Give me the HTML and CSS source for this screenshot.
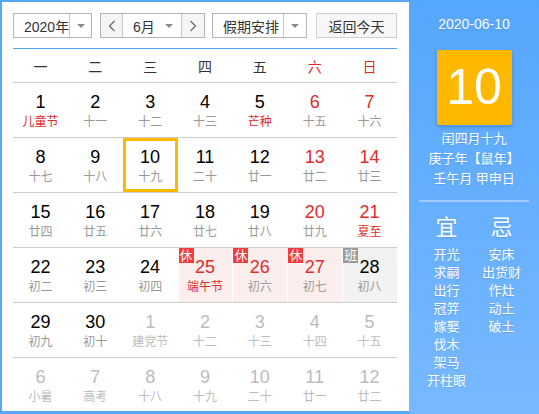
FILE: index.html
```html
<!DOCTYPE html>
<html lang="zh">
<head>
<meta charset="utf-8">
<link rel="stylesheet" href="styles.css">
</head>
<body>
<div class="wrap">
  <div class="main">
    <div class="toolbar">
      <div class="sel sel-year">
        <span class="sel-text">2020年</span>
        <span class="sel-arrow"><i class="tri"></i></span>
      </div>
      <div class="sel sel-month">
        <span class="nav"><svg width="8" height="12" viewBox="0 0 8 12"><polyline points="6.5,1 1.5,6 6.5,11" fill="none" stroke="#666" stroke-width="1.2"/></svg></span>
        <span class="sel-text month-text">6月</span>
        <span class="month-arrow"><i class="tri"></i></span>
        <span class="nav nav-r"><svg width="8" height="12" viewBox="0 0 8 12"><polyline points="1.5,1 6.5,6 1.5,11" fill="none" stroke="#666" stroke-width="1.2"/></svg></span>
      </div>
      <div class="sel sel-hol">
        <span class="sel-text">假期安排</span>
        <span class="sel-arrow"><i class="tri"></i></span>
      </div>
      <div class="btn-today">返回今天</div>
    </div>
    <div class="week">
      <span>一</span><span>二</span><span>三</span><span>四</span><span>五</span><span class="red">六</span><span class="red">日</span>
    </div>
    <div class="days">
      <div class="d"><b>1</b><em class="fest">儿童节</em></div>
      <div class="d"><b>2</b><em>十一</em></div>
      <div class="d"><b>3</b><em>十二</em></div>
      <div class="d"><b>4</b><em>十三</em></div>
      <div class="d"><b>5</b><em class="fest">芒种</em></div>
      <div class="d we"><b>6</b><em>十五</em></div>
      <div class="d we"><b>7</b><em>十六</em></div>

      <div class="d"><b>8</b><em>十七</em></div>
      <div class="d"><b>9</b><em>十八</em></div>
      <div class="d today"><b>10</b><em>十九</em></div>
      <div class="d"><b>11</b><em>二十</em></div>
      <div class="d"><b>12</b><em>廿一</em></div>
      <div class="d we"><b>13</b><em>廿二</em></div>
      <div class="d we"><b>14</b><em>廿三</em></div>

      <div class="d"><b>15</b><em>廿四</em></div>
      <div class="d"><b>16</b><em>廿五</em></div>
      <div class="d"><b>17</b><em>廿六</em></div>
      <div class="d"><b>18</b><em>廿七</em></div>
      <div class="d"><b>19</b><em>廿八</em></div>
      <div class="d we"><b>20</b><em>廿九</em></div>
      <div class="d we"><b>21</b><em class="fest">夏至</em></div>

      <div class="d"><b>22</b><em>初二</em></div>
      <div class="d"><b>23</b><em>初三</em></div>
      <div class="d"><b>24</b><em>初四</em></div>
      <div class="d hol we"><span class="tag">休</span><b>25</b><em class="fest">端午节</em></div>
      <div class="d hol we"><span class="tag">休</span><b>26</b><em>初六</em></div>
      <div class="d hol we"><span class="tag">休</span><b>27</b><em>初七</em></div>
      <div class="d work"><span class="tag tag-work">班</span><b>28</b><em>初八</em></div>

      <div class="d"><b>29</b><em>初九</em></div>
      <div class="d"><b>30</b><em>初十</em></div>
      <div class="d other"><b>1</b><em>建党节</em></div>
      <div class="d other"><b>2</b><em>十二</em></div>
      <div class="d other"><b>3</b><em>十三</em></div>
      <div class="d other"><b>4</b><em>十四</em></div>
      <div class="d other"><b>5</b><em>十五</em></div>

      <div class="d other last"><b>6</b><em>小暑</em></div>
      <div class="d other last"><b>7</b><em>高考</em></div>
      <div class="d other last"><b>8</b><em>十八</em></div>
      <div class="d other last"><b>9</b><em>十九</em></div>
      <div class="d other last"><b>10</b><em>二十</em></div>
      <div class="d other last"><b>11</b><em>廿一</em></div>
      <div class="d other last"><b>12</b><em>廿二</em></div>
    </div>
  </div>
  <div class="panel">
    <div class="p-date">2020-06-10</div>
    <div class="p-day">10</div>
    <div class="p-lunar">
      <div>闰四月十九</div>
      <div>庚子年【鼠年】</div>
      <div>壬午月 甲申日</div>
    </div>
    <div class="p-sep"></div>
    <div class="p-yiji">
      <div class="p-col">
        <div class="p-head">宜</div>
        <div>开光</div><div>求嗣</div><div>出行</div><div>冠笄</div><div>嫁娶</div><div>伐木</div><div>架马</div><div>开柱眼</div>
      </div>
      <div class="p-col">
        <div class="p-head">忌</div>
        <div>安床</div><div>出货财</div><div>作灶</div><div>动土</div><div>破土</div>
      </div>
    </div>
  </div>
</div>
</body>
</html>
```

FILE: styles.css
```css
* { box-sizing: border-box; }
html, body { margin: 0; padding: 0; }
body {
  font-family: "Liberation Sans", "Noto Sans CJK SC", sans-serif;
  background: #fff;
}
.wrap {
  width: 539px;
  height: 414px;
  display: flex;
  background: #57a7fb;
  overflow: hidden;
}
.main {
  width: 407px;
  margin: 2px 0 3px 2px;
  background: #fff;
  padding: 11px 12px 0 11px;
}
.toolbar {
  display: flex;
  height: 25px;
}
.sel {
  display: flex;
  height: 25px;
  border: 1px solid #b4b4b4;
  background: #fff;
  font-size: 14px;
  color: #333;
}
.sel-text {
  display: flex;
  align-items: center;
  white-space: nowrap;
  flex: 1;
}
.sel-arrow {
  display: flex;
  align-items: center;
  justify-content: center;
  width: 23px;
  flex: none;
  border-left: 1px solid #c8c8c8;
}
.tri {
  display: block;
  width: 0;
  height: 0;
  border-left: 4px solid transparent;
  border-right: 4px solid transparent;
  border-top: 4px solid #8a8a8a;
}
.sel-year { width: 79px; }
.sel-year .sel-text { padding-left: 10px; }
.sel-month { width: 105px; margin-left: 8px; }
.nav {
  width: 22px;
  flex: none;
  display: flex;
  align-items: center;
  justify-content: center;
  background: #f5f5f5;
  border-right: 1px solid #c8c8c8;
}
.nav-r { border-right: none; border-left: 1px solid #c8c8c8; width: 23px; }
.month-text { padding-left: 10px; }
.month-arrow {
  width: 24px;
  flex: none;
  display: flex;
  align-items: center;
  justify-content: center;
}
.sel-hol { width: 95px; margin-left: 7px; }
.sel-hol .sel-text { padding-left: 10px; }
.btn-today {
  width: 81px;
  height: 25px;
  margin-left: 9px;
  border: 1px solid #cfcfcf;
  background: #f7f7f7;
  font-size: 14px;
  color: #333;
  display: flex;
  align-items: center;
  justify-content: center;
}
.week {
  margin-top: 10px;
  border-top: 1px solid #4da3fb;
  border-bottom: 1px solid #cdcdcd;
  height: 35px;
  display: grid;
  grid-template-columns: repeat(7, 1fr);
  align-items: center;
  text-align: center;
  font-size: 14px;
  color: #333;
}
.week .red { color: #e02b2b; }
.days {
  display: grid;
  grid-template-columns: repeat(7, 1fr);
  grid-auto-rows: 55px;
}
.d {
  position: relative;
  border-bottom: 1px solid #cdcdcd;
  text-align: center;
  padding-top: 9px;
}
.d.last { border-bottom: none; }
.d b {
  display: block;
  font-weight: normal;
  font-size: 18px;
  line-height: 20px;
  color: #000;
}
.d em {
  display: block;
  font-style: normal;
  font-size: 12px;
  line-height: 20px;
  color: #999;
}
.d.we b { color: #e02b2b; }
.d em.fest { color: #e02b2b; }
.d.other b, .d.other em { color: #bcbcbc; }
.d.today { box-shadow: inset 0 0 0 3px #ffb800; }
.d.hol { background: #fdeeee; box-shadow: inset 1px 0 0 #fff; }
.d.work { background: #f2f2f2; box-shadow: inset 1px 0 0 #fff; }
.tag {
  position: absolute;
  left: 1px;
  top: 0;
  width: 15px;
  height: 15px;
  background: #f43a3a;
  color: #fff;
  font-size: 13px;
  line-height: 15px;
  text-align: center;
}
.tag-work { background: #9a9a9a; }
.panel {
  flex: 1;
  background: linear-gradient(#55a6fd, #78b9ff);
  color: #fff;
  text-align: center;
  padding-top: 15px;
  text-shadow: 0 1px 1px rgba(0, 60, 140, 0.15);
}
.p-date {
  font-size: 14px;
  line-height: 18px;
}
.p-day {
  width: 75px;
  height: 75px;
  margin: 17px auto 0;
  background: #ffb800;
  border-radius: 2px;
  box-shadow: 0 2px 4px rgba(0, 0, 0, 0.18);
  font-size: 50px;
  line-height: 75px;
  text-shadow: none;
}
.p-lunar {
  margin-top: 4px;
  font-size: 13px;
  line-height: 20px;
}
.p-sep {
  height: 2px;
  margin: 11px 10px 0;
  background: #a3cdff;
}
.p-yiji {
  display: flex;
  justify-content: center;
  margin-top: 12px;
}
.p-col {
  width: 55px;
  font-size: 13px;
  line-height: 18px;
}
.p-head {
  font-size: 22px;
  line-height: 28px;
  margin-bottom: 4px;
}
```
